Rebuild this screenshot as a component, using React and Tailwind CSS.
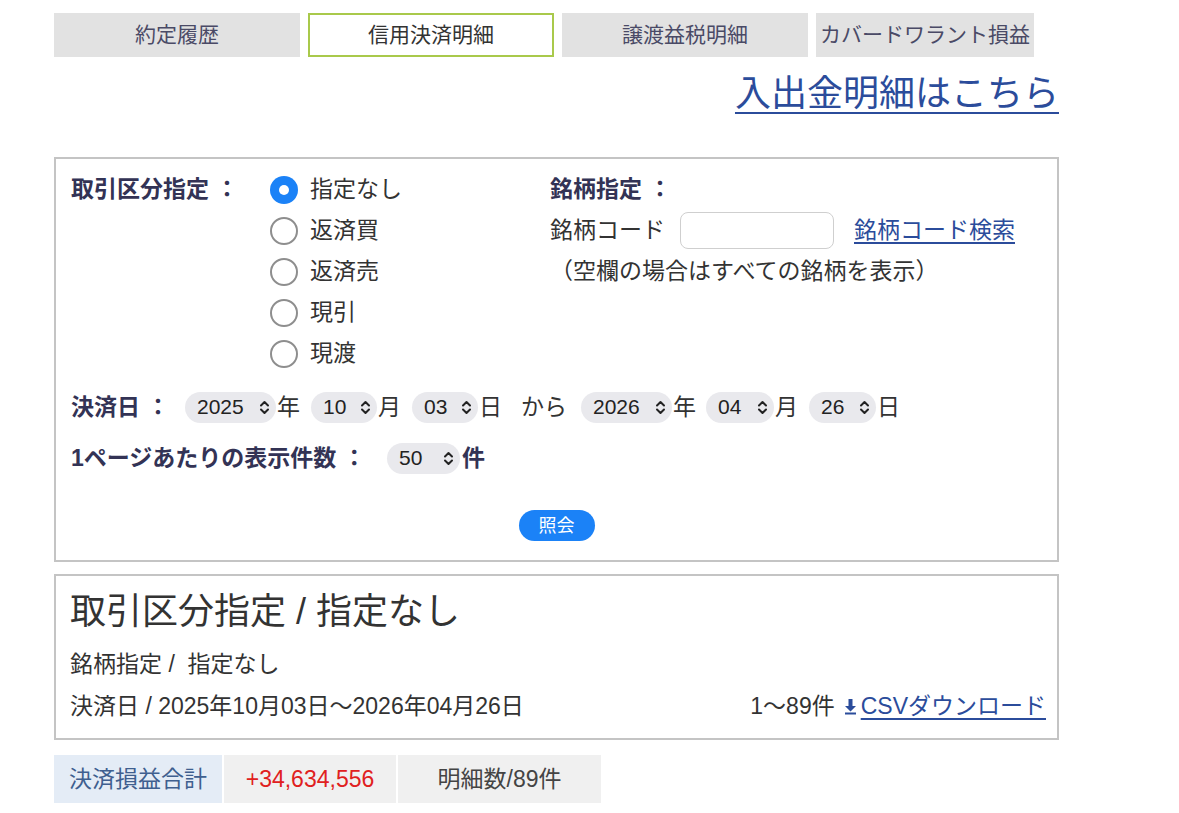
import { useState } from 'react';

const font = { fontFamily: '"Liberation Sans", "Noto Sans CJK JP", sans-serif' };

function Chevrons() {
  return (
    <svg width="11" height="15" viewBox="0 0 11 15" className="shrink-0">
      <path d="M2 5.5 L5.5 2 L9 5.5 M2 9.5 L5.5 13 L9 9.5" fill="none" stroke="#222" strokeWidth="2" strokeLinecap="round" strokeLinejoin="round" />
    </svg>
  );
}

function Pill({ value, w }) {
  return (
    <span className={`inline-flex items-center justify-between h-[31px] rounded-full bg-[#e9e9ed] pl-[12px] pr-[6px] text-[21px] text-[#222] ${w}`}>
      <span>{value}</span>
      <Chevrons />
    </span>
  );
}

function Radio({ checked, label, onClick }) {
  return (
    <div className="flex items-center h-[41px] cursor-pointer" onClick={onClick}>
      {checked ? (
        <span className="w-[28px] h-[28px] rounded-full bg-[#1b82f7] flex items-center justify-center">
          <span className="w-[10px] h-[10px] rounded-full bg-white" />
        </span>
      ) : (
        <span className="w-[28px] h-[28px] rounded-full border-[2.5px] border-[#8e8e8e] bg-white" />
      )}
      <span className="ml-[12px] text-[23px] text-[#333]">{label}</span>
    </div>
  );
}

export default function App() {
  const [kind, setKind] = useState(0);
  const kinds = ['指定なし', '返済買', '返済売', '現引', '現渡'];
  const tabs = ['約定履歴', '信用決済明細', '譲渡益税明細', 'カバードワラント損益'];

  return (
    <div className="min-h-screen bg-white pt-[13px]" style={font}>
      <div className="ml-[54px] w-[1005px]">
        {/* tabs */}
        <div className="flex gap-[8px]">
          {tabs.map((t, i) => (
            <div
              key={t}
              className={`h-[44px] flex items-center justify-center whitespace-nowrap text-[21px] ${i === 3 ? 'w-[218px]' : 'w-[246px]'} ${
                i === 1 ? 'bg-white border-2 border-[#a9c94b] text-[#333]' : 'bg-[#e2e2e2] text-[#4a4a66]'
              }`}
            >
              {t}
            </div>
          ))}
        </div>

        <div className="flex justify-end mt-[15px]">
          <a href="#" className="text-[36px] leading-[44px] text-[#2b4c9b] underline underline-offset-[6px] decoration-[1.5px]">
            入出金明細はこちら
          </a>
        </div>

        {/* search form */}
        <div className="mt-[41px] border-2 border-[#c4c4c4] h-[405px] px-[15px] pt-[10px]">
          <div className="flex">
            <div className="w-[199px] h-[41px] flex items-center text-[23px] font-bold text-[#333355]">取引区分指定 ：</div>
            <div className="w-[280px]">
              {kinds.map((k, i) => (
                <Radio key={k} checked={kind === i} label={k} onClick={() => setKind(i)} />
              ))}
            </div>
            <div>
              <div className="h-[41px] flex items-center text-[23px] font-bold text-[#333355]">銘柄指定 ：</div>
              <div className="h-[41px] flex items-center text-[23px] text-[#333]">
                <span>銘柄コード</span>
                <span className="ml-[15px] w-[154px] h-[37px] rounded-[8px] border border-[#cfcfcf] bg-white" />
                <a href="#" className="ml-[20px] text-[#2b4c9b] underline underline-offset-[4px]">銘柄コード検索</a>
              </div>
              <div className="h-[41px] flex items-center text-[23px] text-[#333]">（空欄の場合はすべての銘柄を表示）</div>
            </div>
          </div>

          <div className="flex items-center h-[34px] mt-[16px] text-[23px] text-[#333]">
            <span className="font-bold text-[#333355] w-[114px]">決済日 ：</span>
            <Pill value="2025" w="w-[91px]" />
            <span className="ml-[1px]">年</span>
            <Pill value="10" w="w-[66px] ml-[11px]" />
            <span className="ml-[1px]">月</span>
            <Pill value="03" w="w-[66px] ml-[11px]" />
            <span className="ml-[1px]">日</span>
            <span className="ml-[19px]">から</span>
            <Pill value="2026" w="w-[91px] ml-[14px]" />
            <span className="ml-[1px]">年</span>
            <Pill value="04" w="w-[68px] ml-[10px]" />
            <span className="ml-[1px]">月</span>
            <Pill value="26" w="w-[67px] ml-[11px]" />
            <span className="ml-[1px]">日</span>
          </div>

          <div className="flex items-center h-[34px] mt-[17px] text-[23px]">
            <span className="font-bold text-[#333355] w-[316px]">1ページあたりの表示件数 ：</span>
            <Pill value="50" w="w-[73px]" />
            <span className="ml-[2px] font-bold text-[#333355]">件</span>
          </div>

          <div className="flex justify-center mt-[35px]">
            <button className="w-[76px] h-[31px] rounded-full bg-[#1b82f7] text-white text-[18px] leading-none">照会</button>
          </div>
        </div>

        {/* result summary */}
        <div className="mt-[12px] border-2 border-[#c4c4c4] h-[166px] pl-[14px] pr-[11px] pt-[16px] text-[#333]">
          <div className="text-[36px] leading-[40px]">取引区分指定 / 指定なし</div>
          <div className="text-[23px] mt-[17px] leading-[30px]">銘柄指定 /&nbsp; 指定なし</div>
          <div className="flex justify-between items-center text-[23px] mt-[12px] leading-[30px]">
            <span>決済日 / 2025年10月03日〜2026年04月26日</span>
            <span className="flex items-center">
              1〜89件
              <svg width="13" height="18" viewBox="0 0 13 18" className="ml-[9px] mr-[4px]">
                <path d="M4.5 2h4v7h3.5L6.5 14.5 1 9h3.5z" fill="#2b4c9b" />
                <rect x="1" y="15.5" width="11" height="2" fill="#2b4c9b" />
              </svg>
              <a href="#" className="text-[#2b4c9b] underline underline-offset-[4px]">CSVダウンロード</a>
            </span>
          </div>
        </div>

        <div className="flex gap-[2px] mt-[15px] h-[48px] text-[23px]">
          <div className="w-[168px] bg-[#e4ecf6] text-[#3f5f8f] flex items-center justify-center">決済損益合計</div>
          <div className="w-[172px] bg-[#f0f0f0] text-[#e02020] flex items-center justify-center">+34,634,556</div>
          <div className="w-[203px] bg-[#f0f0f0] text-[#444] flex items-center justify-center">明細数/89件</div>
        </div>
      </div>
    </div>
  );
}
